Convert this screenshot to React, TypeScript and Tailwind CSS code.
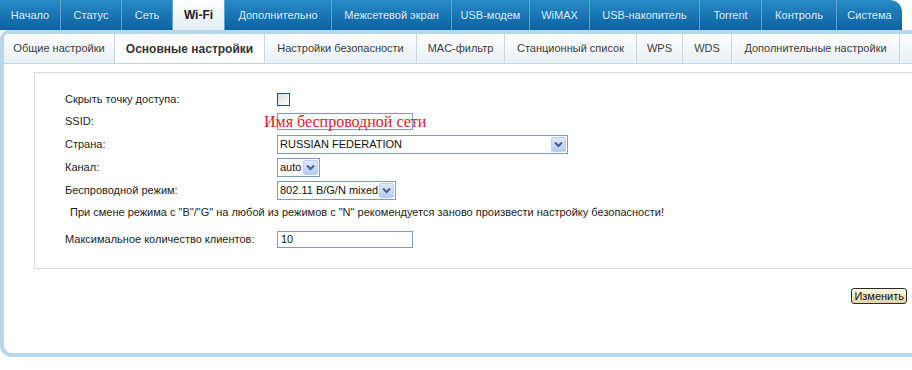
const topTabs = [
  { label: "Начало", w: "w-[61px]" },
  { label: "Статус", w: "w-[61px]" },
  { label: "Сеть", w: "w-[51px]" },
  { label: "Wi-Fi", w: "w-[52px]", active: true },
  { label: "Дополнительно", w: "w-[107px]" },
  { label: "Межсетевой экран", w: "w-[120px]" },
  { label: "USB-модем", w: "w-[78px]" },
  { label: "WiMAX", w: "w-[60px]" },
  { label: "USB-накопитель", w: "w-[110px]" },
  { label: "Torrent", w: "w-[62px]" },
  { label: "Контроль", w: "w-[75px]" },
  { label: "Система", w: "w-[65px]" },
];

const subTabs = [
  { label: "Общие настройки", w: "w-[111px]" },
  { label: "Основные настройки", w: "w-[150px]", active: true },
  { label: "Настройки безопасности", w: "w-[152px]" },
  { label: "MAC-фильтр", w: "w-[88px]" },
  { label: "Станционный список", w: "w-[132px]" },
  { label: "WPS", w: "w-[46px]" },
  { label: "WDS", w: "w-[49px]" },
  { label: "Дополнительные настройки", w: "w-[168px]" },
];

function Arrow() {
  return (
    <div className="w-[15px] h-[15px] shrink-0 rounded-[2px] border border-[#b9cdf5] bg-gradient-to-b from-[#dfe9fd] to-[#b5cbf7] flex items-center justify-center">
      <svg width="9" height="7" viewBox="0 0 9 7">
        <path d="M1 1.5 L4.5 5 L8 1.5" fill="none" stroke="#4d6185" strokeWidth="2" />
      </svg>
    </div>
  );
}

function Select({ value, w }: { value: string; w: string }) {
  return (
    <div className={`${w} h-[19px] border border-[#7f9db9] bg-white flex items-center justify-between pl-[2px] pr-[1px]`}>
      <span className="text-[11px] text-[#111] whitespace-nowrap">{value}</span>
      <Arrow />
    </div>
  );
}

function Row({ label, h, children }: { label: string; h: string; children?: React.ReactNode }) {
  return (
    <div className={`flex items-center ${h}`}>
      <div className="w-[212px] shrink-0 text-[11px] text-[#222]">{label}</div>
      {children}
    </div>
  );
}

export default function App() {
  return (
    <div
      className="w-[912px] h-[370px] bg-white overflow-hidden"
      style={{ fontFamily: '"Liberation Sans", Arial, sans-serif' }}
    >
      {/* Top menu */}
      <div className="flex h-[30px] w-[902px] rounded-tr-[12px] bg-gradient-to-b from-[#278bc7] to-[#0c62a0] overflow-hidden">
        {topTabs.map((t, i) => (
          <div
            key={t.label}
            className={`${t.w} shrink-0 h-full flex items-center justify-center text-[11px] ${
              i < topTabs.length - 1 ? "border-r border-[#5ea5d3]" : ""
            } ${
              t.active
                ? "bg-gradient-to-b from-white to-[#e3edf5] text-[#222] font-bold text-[12px]"
                : "text-[#dbe9f5]"
            }`}
          >
            {t.label}
          </div>
        ))}
      </div>

      {/* Panel */}
      <div className="h-[327px] border-t-[4px] border-l-[4px] border-b-[4px] border-[#b9d7ea] rounded-tl-[9px] rounded-bl-[12px] flex flex-col">
        <div className="flex h-[30px] border-b border-[#c3d5e2] bg-gradient-to-b from-white to-[#e8eff5] rounded-tl-[5px]">
          {subTabs.map((t) => (
            <div
              key={t.label}
              className={`${t.w} shrink-0 h-full flex items-center justify-center border-r border-[#c9d7e2] ${
                t.active ? "bg-white font-bold text-[#333] text-[12px]" : "text-[#3c3c3c] text-[11px]"
              }`}
            >
              {t.label}
            </div>
          ))}
          <div className="flex-1" />
        </div>

        <div className="flex-1 flex flex-col">
          <div className="ml-[30px] mt-[8px] h-[197px] border border-r-0 border-[#d9d9d9] pl-[30px] pt-[15px]">
            <Row label="Скрыть точку доступа:" h="h-[22px]">
              <div className="w-[13px] h-[13px] border border-[#1c5180] bg-gradient-to-br from-[#dcdcd6] to-white" />
            </Row>
            <Row label="SSID:" h="h-[23px]">
              <div className="relative w-[136px] h-[17px] border border-[#7f9db9]">
                <span
                  className="absolute left-[-14px] top-[-2px] text-[16px] leading-[20px] text-[#d8232a] whitespace-nowrap"
                  style={{ fontFamily: '"Liberation Serif", "Times New Roman", serif' }}
                >
                  Имя беспроводной сети
                </span>
              </div>
            </Row>
            <Row label="Страна:" h="h-[23px]">
              <Select value="RUSSIAN FEDERATION" w="w-[291px]" />
            </Row>
            <Row label="Канал:" h="h-[23px]">
              <Select value="auto" w="w-[43px]" />
            </Row>
            <Row label="Беспроводной режим:" h="h-[23px]">
              <Select value="802.11 B/G/N mixed" w="w-[119px]" />
            </Row>
            <div className="h-[21px] flex items-center pl-[5px] text-[11px] text-[#222] whitespace-nowrap">
              При смене режима с "B"/"G" на любой из режимов с "N" рекомендуется заново произвести настройку безопасности!
            </div>
            <div className="mt-[5px]">
              <Row label="Максимальное количество клиентов:" h="h-[22px]">
                <div className="w-[136px] h-[17px] border border-[#7f9db9] flex items-center pl-[3px] text-[11px] text-[#111]">
                  10
                </div>
              </Row>
            </div>
          </div>

          <div className="flex justify-end mt-[19px] pr-[5px]">
            <button className="h-[16px] px-[2px] border border-[#2b2b2b] rounded-[3px] bg-gradient-to-b from-[#fff8e4] to-[#e6d3a3] text-[11px] leading-[14px] text-[#111]">
              Изменить
            </button>
          </div>
        </div>
      </div>
    </div>
  );
}
